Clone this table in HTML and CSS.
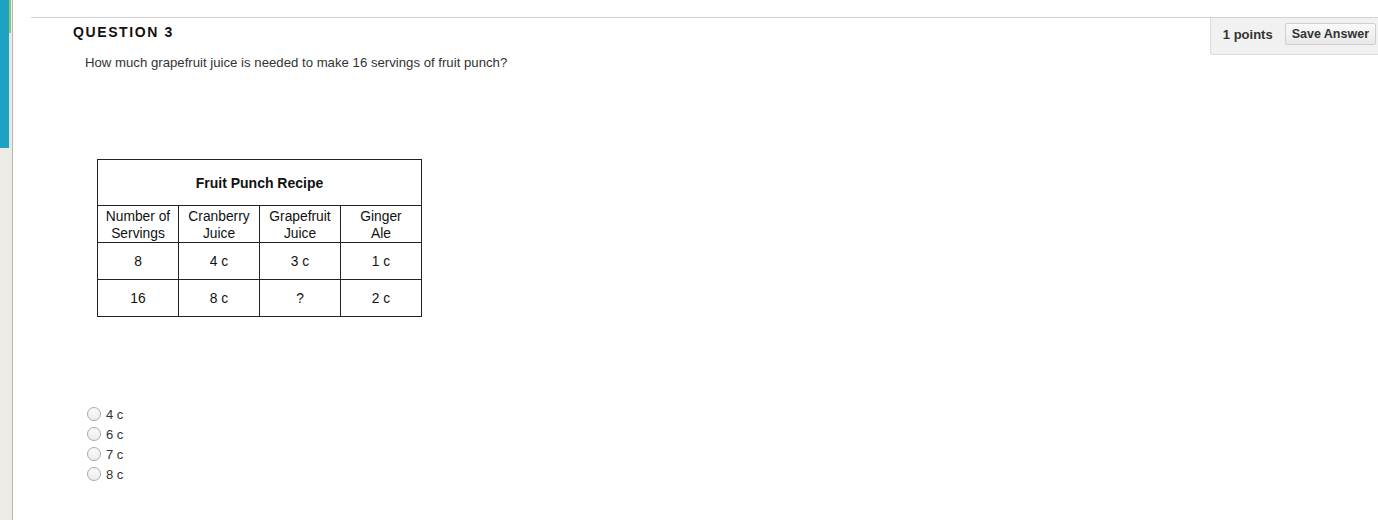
FILE: index.html
```html
<!DOCTYPE html>
<html lang="en">
<head>
  <meta charset="UTF-8" />
  <title>Question 3</title>
  <link rel="stylesheet" href="styles.css">
</head>
<body>
  <div class="page">
    <!-- Left navigation strip -->
    <div class="side">
      <div class="side-tab"></div>
    </div>

    <div class="main">
      <div class="question">
        <div class="question-head">
          <h3 class="question-title">QUESTION 3</h3>
          <div class="points-box">
            <span class="points">1 points</span>
            <button class="save-btn">Save Answer</button>
          </div>
        </div>

        <p class="question-text">How much grapefruit juice is needed to make 16 servings of fruit punch?</p>

        <table class="recipe">
          <tr class="title-row">
            <th colspan="4">Fruit Punch Recipe</th>
          </tr>
          <tr class="head-row">
            <td>Number of<br>Servings</td>
            <td>Cranberry<br>Juice</td>
            <td>Grapefruit<br>Juice</td>
            <td>Ginger<br>Ale</td>
          </tr>
          <tr class="data-row">
            <td>8</td>
            <td>4 c</td>
            <td>3 c</td>
            <td>1 c</td>
          </tr>
          <tr class="data-row">
            <td>16</td>
            <td>8 c</td>
            <td>?</td>
            <td>2 c</td>
          </tr>
        </table>

        <ul class="answers">
          <li><span class="radio"></span>4 c</li>
          <li><span class="radio"></span>6 c</li>
          <li><span class="radio"></span>7 c</li>
          <li><span class="radio"></span>8 c</li>
        </ul>
      </div>
    </div>
  </div>
</body>
</html>
```

FILE: styles.css
```css
html, body {
  margin: 0;
  height: 100%;
  background: #fff;
}

body {
  font-family: "Liberation Sans", Arial, sans-serif;
  color: #333;
}

.page {
  display: flex;
  height: 520px;
  overflow: hidden;
}

/* Left strip */
.side {
  width: 12px;
  flex-shrink: 0;
  background: #edebe5;
  border-right: 1px solid #b9b7b2;
}

.side-tab {
  width: 11px;
  height: 148px;
  background:
    linear-gradient(#8cc66e, #8cc66e) right top / 2px 33px no-repeat,
    linear-gradient(#e6e4dd, #e6e4dd) right bottom / 2px 115px no-repeat,
    #1ea2c2;
  border-bottom-right-radius: 2px;
}

.main {
  flex: 1;
  padding-left: 18px;
}

.question {
  margin-top: 17px;
  border-top: 1px solid #d2d2d2;
}

.question-head {
  display: flex;
  justify-content: space-between;
  align-items: flex-start;
}

.question-title {
  margin: 6px 0 0 42px;
  font-size: 14px;
  font-weight: bold;
  letter-spacing: 1.6px;
  color: #111;
}

.points-box {
  display: flex;
  align-items: center;
  gap: 12px;
  box-sizing: border-box;
  height: 37px;
  padding: 0 2px 4px 12px;
  background: #f1f1f1;
  border-left: 1px solid #dcdcdc;
  border-bottom: 1px solid #dcdcdc;
  border-bottom-left-radius: 3px;
}

.points {
  font-size: 13px;
  font-weight: bold;
  color: #333;
}

.save-btn {
  height: 22px;
  padding: 0 6px;
  font-family: "Liberation Sans", Arial, sans-serif;
  font-size: 12.5px;
  font-weight: bold;
  color: #333;
  background: linear-gradient(#fafafa, #e8e8e8);
  border: 1px solid #cfcfcf;
  border-radius: 2px;
}

.question-text {
  margin: 0 0 0 54px;
  font-size: 13.2px;
  color: #333;
}

/* Recipe table */
.recipe {
  margin: 89px 0 0 66px;
  border-collapse: collapse;
  font-family: "Liberation Sans", Arial, sans-serif;
  font-size: 13.8px;
  color: #111;
}

.recipe th,
.recipe td {
  border: 1px solid #222;
  text-align: center;
  padding: 0;
}

.recipe th {
  height: 45px;
  font-size: 14px;
  font-weight: bold;
}

.recipe td {
  width: 80px;
  line-height: 17px;
}

.head-row td {
  height: 35px;
  padding-top: 1px;
}

.data-row td {
  height: 36px;
}

/* Answer choices */
.answers {
  list-style: none;
  margin: 87px 0 0 56px;
  padding: 0;
  font-size: 13px;
  color: #333;
}

.answers li {
  display: flex;
  align-items: center;
  height: 20px;
}

.radio {
  width: 12px;
  height: 12px;
  margin-right: 5px;
  border: 1px solid #a8a8a8;
  border-radius: 50%;
  background: linear-gradient(#fafafa, #ececec);
}
```
